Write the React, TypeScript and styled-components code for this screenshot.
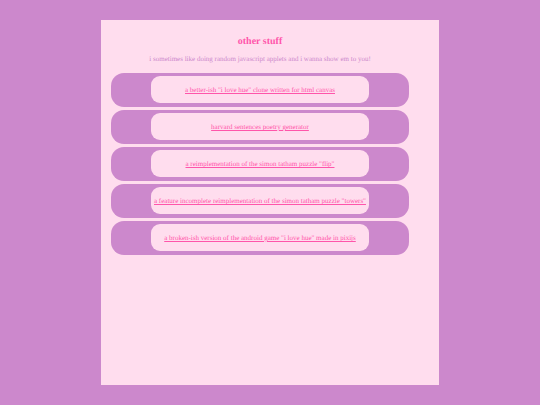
import React from "react";
import styled, { createGlobalStyle } from "styled-components";

const GlobalStyle = createGlobalStyle`
  * { box-sizing: border-box; }
  body {
    margin: 0;
    background: #cc88cc;
    font-family: "Liberation Serif", serif;
    font-size: 7px;
    line-height: 8px;
    text-align: center;
    text-rendering: geometricPrecision;
  }
`;

const Page = styled.div`
  min-height: 100vh;
  display: flex;
  justify-content: center;
  padding: 20px 0;
`;

const Panel = styled.main`
  width: 62.5%;
  padding: 16px 30px 0 10px;
  background: #ffddee;
`;

const Title = styled.h1`
  margin: 0;
  color: #ff55aa;
  font-size: 10px;
  line-height: 12px;
`;

const Intro = styled.p`
  margin: 7px 0 10px;
  color: #cc88cc;
`;

const List = styled.ul`
  display: grid;
  gap: 3px;
  margin: 0;
  padding: 0;
  list-style: none;
`;

const Item = styled.li`
  display: flex;
  justify-content: center;
  padding: 3px 40px 4px;
  border-radius: 13px;
  background: #cc88cc;
`;

const Pill = styled.div`
  flex: 1;
  padding: 10px 2px 9px;
  border-radius: 9px;
  background: #ffddee;
`;

const ItemLink = styled.a`
  color: #ff55aa;
`;

const projects = [
  'a better-ish "i love hue" clone written for html canvas',
  "harvard sentences poetry generator",
  'a reimplementation of the simon tatham puzzle "flip"',
  'a feature incomplete reimplementation of the simon tatham puzzle "towers"',
  'a broken-ish version of the android game "i love hue" made in pixijs',
];

export default function App() {
  return (
    <Page>
      <GlobalStyle />
      <Panel>
        <Title>other stuff</Title>
        <Intro>
          i sometimes like doing random javascript applets and i wanna show em to you!
        </Intro>
        <List>
          {projects.map((name) => (
            <Item key={name}>
              <Pill>
                <ItemLink href="#">{name}</ItemLink>
              </Pill>
            </Item>
          ))}
        </List>
      </Panel>
    </Page>
  );
}
